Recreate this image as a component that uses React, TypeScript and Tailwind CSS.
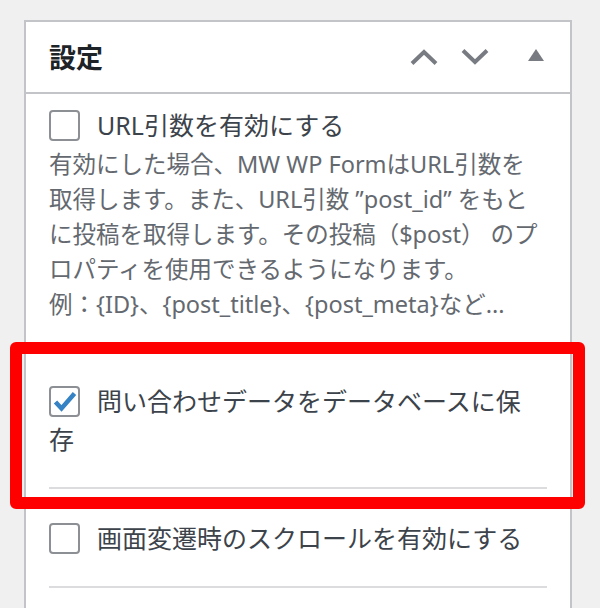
import React from 'react';

// settings meta box with the highlighted "save to database" option
const Checkbox: React.FC<{ checked?: boolean }> = ({ checked }) => (
  <span className="inline-block align-top mt-[4px] mr-[17px] w-[31px] h-[31px] rounded-[4px] border-2 border-[#8c8f94] bg-white">
    {checked && (
      <svg viewBox="0 0 27 27" className="w-[27px] h-[27px]">
        <polyline
          points="4.5,14 10.5,20.5 23.5,5.5"
          fill="none"
          stroke="#3582c4"
          strokeWidth="4.5"
          strokeLinejoin="miter"
        />
      </svg>
    )}
  </span>
);

const App: React.FC = () => {
  return (
    <div className="relative h-[608px] overflow-hidden bg-[#f0f0f1] pt-[20px] pl-[24px] font-['Noto_Sans','Noto_Sans_CJK_JP',sans-serif]">
      <div className="w-[548px] border-2 border-b-0 border-[#c3c4c7] bg-white">
        {/* Header */}
        <div className="h-[72px] flex items-center border-b-2 border-[#c3c4c7] pl-[23px] pr-[26px]">
          <h2 className="text-[27px] leading-[27px] font-bold text-[#1d2327]">設定</h2>
          <div className="ml-auto flex items-center">
            <svg viewBox="0 0 28 16" className="w-[28px] h-[16px]">
              <polyline points="2,14.5 14,3 26,14.5" fill="none" stroke="#787c82" strokeWidth="4" />
            </svg>
            <svg viewBox="0 0 28 16" className="ml-[23px] w-[28px] h-[16px]">
              <polyline points="2,1.5 14,13 26,1.5" fill="none" stroke="#787c82" strokeWidth="4" />
            </svg>
            <svg viewBox="0 0 16 12" className="ml-[39px] mb-[4px] w-[16px] h-[12px]">
              <polygon points="8,0 16,12 0,12" fill="#787c82" />
            </svg>
          </div>
        </div>

        {/* Options */}
        <div className="px-[23px] pb-[40px]">
          <div className="pt-[12px] pb-[28px] border-b-2 border-[#dcdcde]">
            <label className="block text-[25px] leading-[38px] text-[#3c434a] whitespace-nowrap">
              <Checkbox />URL引数を有効にする
            </label>
            <p className="mt-[3px] text-[23.5px] leading-[35px] text-[#646970] whitespace-nowrap">
              有効にした場合、MW WP FormはURL引数を
              <br />
              取得します。また、URL引数 ”post_id” をもと
              <br />
              に投稿を取得します。その投稿（$post） のプ
              <br />
              ロパティを使用できるようになります。
              <br />
              例：{'{ID}'}、{'{post_title}'}、{'{post_meta}'}など...
            </p>
          </div>

          <div className="pt-[30px] pb-[29px] border-b-2 border-[#dcdcde]">
            <label className="block text-[25px] leading-[38px] text-[#3c434a] whitespace-nowrap">
              <Checkbox checked />問い合わせデータをデータベースに保
              <br />
              存
            </label>
          </div>

          <div className="pt-[30px] pb-[29px] border-b-2 border-[#dcdcde]">
            <label className="block text-[25px] leading-[38px] text-[#3c434a] whitespace-nowrap">
              <Checkbox />画面変遷時のスクロールを有効にする
            </label>
          </div>
        </div>
      </div>

      {/* Highlight annotation */}
      <div className="absolute left-[10px] top-[342px] w-[575px] h-[167px] border-[12px] border-[#ff0000] rounded-[6px]" />
    </div>
  );
};

export default App;
